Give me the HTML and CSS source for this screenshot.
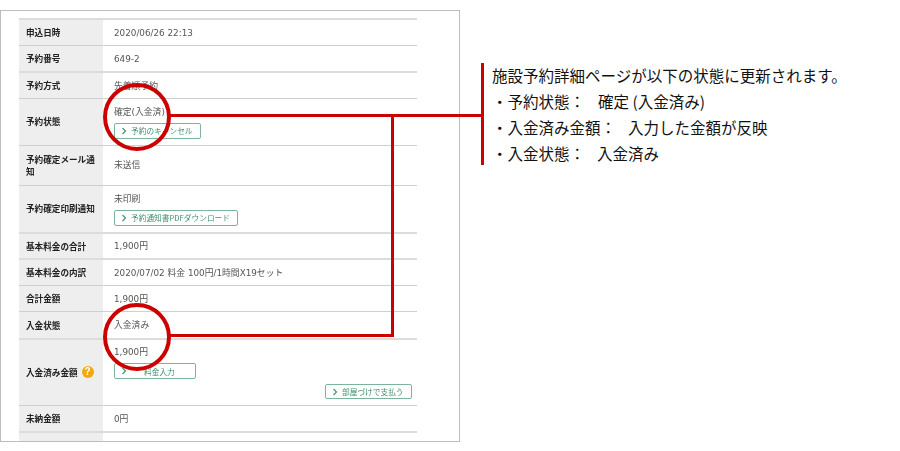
FILE: index.html
```html
<!DOCTYPE html>
<html lang="ja">
<head>
<meta charset="utf-8">
<title>施設予約詳細</title>
<link rel="stylesheet" href="styles.css">
</head>
<body>
<div class="stage">
  <section class="frame">
    <div class="sheet">
      <div class="row h27 thick"><div class="label">申込日時</div><div class="value"><p>2020/06/26 22:13</p></div></div>
      <div class="row h26"><div class="label">予約番号</div><div class="value"><p>649-2</p></div></div>
      <div class="row h27 thick"><div class="label">予約方式</div><div class="value"><p>先着順予約</p></div></div>
      <div class="row h47"><div class="label">予約状態</div><div class="value"><p>確定(入金済)</p><a class="btn w87"><svg class="chev" viewBox="0 0 6 8"><path d="M1.5 1 L4.5 4 L1.5 7"/></svg>予約のキャンセル</a></div></div>
      <div class="row h40"><div class="label">予約確定メール通知</div><div class="value"><p>未送信</p></div></div>
      <div class="row h47"><div class="label">予約確定印刷通知</div><div class="value"><p>未印刷</p><a class="btn w124"><svg class="chev" viewBox="0 0 6 8"><path d="M1.5 1 L4.5 4 L1.5 7"/></svg>予約通知書PDFダウンロード</a></div></div>
      <div class="row h26 thick"><div class="label">基本料金の合計</div><div class="value"><p>1,900円</p></div></div>
      <div class="row h27 thick"><div class="label">基本料金の内訳</div><div class="value"><p>2020/07/02 料金 100円/1時間X19セット</p></div></div>
      <div class="row h27"><div class="label">合計金額</div><div class="value"><p>1,900円</p></div></div>
      <div class="row h27"><div class="label">入金状態</div><div class="value"><p>入金済み</p></div></div>
      <div class="row h67 thick"><div class="label">入金済み金額<span class="help">?</span></div><div class="value"><p>1,900円</p><a class="btn w82 wide"><svg class="chev" viewBox="0 0 6 8"><path d="M1.5 1 L4.5 4 L1.5 7"/></svg><span>料金入力</span></a><a class="btn w87 end"><svg class="chev" viewBox="0 0 6 8"><path d="M1.5 1 L4.5 4 L1.5 7"/></svg>部屋づけで支払う</a></div></div>
      <div class="row h26"><div class="label">未納金額</div><div class="value"><p>0円</p></div></div>
      <div class="row tail thick"><div class="label"></div><div class="value"></div></div>
    </div>
  </section>
  <aside class="note">
    <p>施設予約詳細ページが以下の状態に更新されます。</p>
    <p>・予約状態：<span class="gap13">確定 (入金済み)</span></p>
    <p>・入金済み金額：<span class="gap12">入力した金額が反映</span></p>
    <p>・入金状態：<span class="gap12">入金済み</span></p>
  </aside>
  <svg class="callout" width="900" height="451" viewBox="0 0 900 451">
    <circle cx="137" cy="117" r="32"/>
    <circle cx="137" cy="337" r="32"/>
    <path d="M169 115.500 H482"/>
    <path d="M169 335.500 H392.500 V115.500"/>
    <path d="M482.500 63 V165"/>
  </svg>
</div>
</body>
</html>
```
FILE: styles.css
```css
* { box-sizing: border-box; }
html, body { margin: 0; padding: 0; background: #fff; }
p { margin: 0; }
.stage {
  position: relative;
  display: flex;
  width: 900px;
  height: 451px;
  padding-top: 10px;
  overflow: hidden;
  font-family: "Noto Sans CJK JP", "Liberation Sans", sans-serif;
}
.frame {
  width: 460px;
  height: 432px;
  padding: 7px 42px 0 18px;
  border: 1px solid #bdbdbd;
  overflow: hidden;
  flex: none;
}
.sheet { width: 398px; filter: blur(0.25px); }
.row {
  display: flex;
  border-top: 1px solid #cfcfcf;
  font-size: 8.600px;
  line-height: 12.500px;
}
.thick { border-top: 2px solid #dcdcdc; }
.h26 { height: 26.500px; }
.h27 { height: 26.500px; }
.h40 { height: 40px; }
.h47 { height: 47px; }
.h67 { height: 67px; }
.tail { height: 12px; }
.label {
  display: flex;
  align-items: center;
  width: 84px;
  flex: none;
  padding: 0 8px 0 7px;
  background: #eee;
  color: #222;
  font-weight: 700;
}
.value {
  flex: 1;
  display: flex;
  flex-direction: column;
  justify-content: center;
  align-items: flex-start;
  padding: 1px 5px 0 11px;
  color: #555;
  font-size: 8.800px;
  font-family: "DejaVu Sans", "Noto Sans CJK JP", sans-serif;
}
.help {
  display: inline-flex;
  align-items: center;
  justify-content: center;
  width: 12px;
  height: 12px;
  margin-left: 4px;
  flex: none;
  border-radius: 50%;
  background: #f5a70f;
  color: #fff;
  font: 700 10px/12px "Liberation Sans", sans-serif;
}
.btn {
  display: flex;
  align-items: center;
  height: 15.500px;
  margin-top: 5px;
  padding-left: 6px;
  border: 1px solid #7db39b;
  border-radius: 2px;
  color: #3f8f6c;
  font-family: "Noto Sans CJK JP", "Liberation Sans", sans-serif;
  font-size: 7.700px;
  line-height: 13px;
  white-space: nowrap;
}
.w87 { width: 87px; }
.w82 { width: 82px; }
.w124 { width: 124px; }
.wide span { margin-left: 13px; }
.end { align-self: flex-end; margin-top: 5px; }
.chev {
  width: 6px;
  height: 8px;
  margin-right: 4px;
  flex: none;
  fill: none;
  stroke: #3f8f6c;
  stroke-width: 1.100;
}
.note {
  position: absolute;
  left: 492px;
  top: 62px;
  color: #111;
  font-size: 15.500px;
  line-height: 26px;
  white-space: nowrap;
}
.gap13 { margin-left: 13px; }
.gap12 { margin-left: 12px; }
.callout {
  position: absolute;
  left: 0;
  top: 0;
  fill: none;
  pointer-events: none;
}
.callout path { stroke: #cc0000; stroke-width: 3; }
.callout circle { stroke: #cc0000; stroke-width: 4; }
```
